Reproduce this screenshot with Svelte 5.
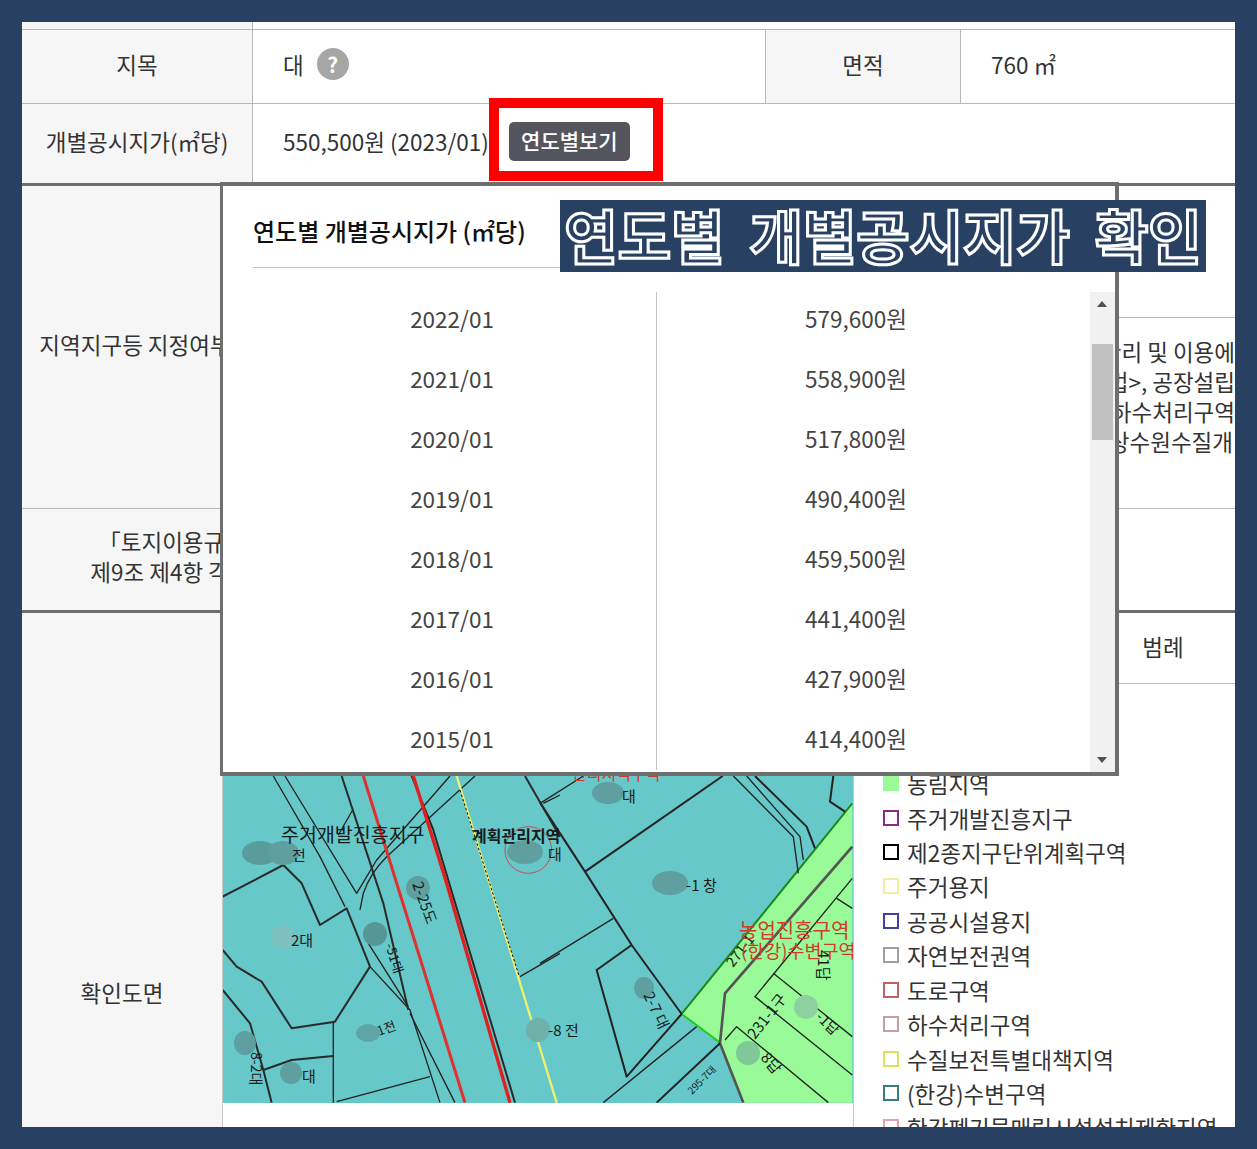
<script lang="ts">
	const years = [
		['2022/01', '579,600원'],
		['2021/01', '558,900원'],
		['2020/01', '517,800원'],
		['2019/01', '490,400원'],
		['2018/01', '459,500원'],
		['2017/01', '441,400원'],
		['2016/01', '427,900원'],
		['2015/01', '414,400원']
	];

	const legend = [
		['계획관리지역', '#c05050', false],
		['농업진흥구역', '#98fb98', false],
		['농림지역', '#98fb98', true],
		['주거개발진흥지구', '#8a2a8a', false],
		['제2종지구단위계획구역', '#000000', false],
		['주거용지', '#f0f0a0', false],
		['공공시설용지', '#4040a0', false],
		['자연보전권역', '#a0a0a0', false],
		['도로구역', '#c06060', false],
		['하수처리구역', '#c0a0a0', false],
		['수질보전특별대책지역', '#e0e060', false],
		['(한강)수변구역', '#308080', false],
		['한강폐기물매립시설설치제한지역', '#e0a0b0', false]
	];

	// 블러 처리된 지번 (좌표는 도면 기준)
	const blots = [
		[260, 853, 18, 12, '#5a9c9c'],
		[283, 853, 16, 12, '#5f9f9f'],
		[418, 888, 12, 12, '#5f9f9f'],
		[283, 937, 12, 12, '#7cc0c0'],
		[375, 934, 12, 12, '#559696'],
		[368, 1033, 12, 9, '#5fa5a5'],
		[245, 1043, 11, 12, '#5f9f9f'],
		[291, 1073, 11, 11, '#5f9f9f'],
		[525, 852, 18, 12, '#5f9f9f'],
		[538, 1030, 12, 12, '#6fb0a8'],
		[608, 793, 16, 11, '#5f9f9f'],
		[670, 883, 18, 12, '#5f9f9f'],
		[644, 988, 10, 11, '#5f9f9f'],
		[806, 1007, 12, 12, '#8fd0a0'],
		[748, 1053, 12, 12, '#80c898']
	];
</script>

<div class="page">
	<div class="sheet">
		<div class="row strip">
			<div class="th top-th"></div>
			<div class="td"></div>
		</div>
		<div class="row land">
			<div class="th top-th">지목</div>
			<div class="td land-val">
				<span>대</span>
				<span class="help">?</span>
			</div>
			<div class="th area-th">면적</div>
			<div class="td area-val">760 ㎡</div>
		</div>
		<div class="row price">
			<div class="th top-th">개별공시지가(㎡당)</div>
			<div class="td price-val">
				<span class="price-text">550,500원 (2023/01)</span>
				<button class="year-btn">연도별보기</button>
			</div>
		</div>
		<div class="row zone">
			<div class="th zone-th">지역지구등 지정여부</div>
			<div class="zone-right">
				<div class="zone-top"></div>
				<div class="zone-text">
					<span>가축분뇨의 관리 및 이용에</span>
					<span>공업지역 법>, 공장설립</span>
					<span>하수처리구역</span>
					<span class="short">상수원수질개</span>
				</div>
			</div>
		</div>
		<div class="row rule">
			<div class="th rule-th">「토지이용규제 기본법 시행령」<br />제9조 제4항 각 호에 해당되는 사항</div>
		</div>
		<div class="row plan">
			<div class="th plan-th">확인도면</div>
			<div class="plan-body">
				<div class="plan-head">
					<div class="head-map"></div>
					<div class="head-legend">범례</div>
				</div>
				<div class="plan-main">
					<svg class="map" viewBox="223 684 630 419" width="630" height="419">
						<rect x="223" y="684" width="630" height="419" fill="#66c8c8" />
						<g transform="translate(540 760) scale(0.3333)" fill="none" stroke-linejoin="round">
							<path d="M937 130 L425 762 L540 848 L610 1028 L937 1028 Z" fill="#98fb98" />
							<path d="M937 130 L425 762" stroke="#178a17" stroke-width="6" />
							<path d="M425 762 L540 848" stroke="#22cc22" stroke-width="6" />
							<path d="M937 260 L555 700 L540 850 L610 1028" stroke="#555" stroke-width="8" />
							<g stroke="#222" stroke-width="6">
								<path d="M540 850 L350 1028" />
								<path d="M425 762 L260 950 L170 630 L275 555" />
								<path d="M0 128 L135 335 L275 555 L425 762" />
								<path d="M135 335 L548 48" />
								<path d="M645 48 L800 200 L825 265" />
								<path d="M880 48 L870 125 L915 155" />
							</g>
							<g stroke="#222" stroke-width="4">
								<path d="M0 130 L130 48" />
								<path d="M220 475 L0 610" />
								<path d="M470 800 L190 1028" />
								<path d="M580 48 L760 230 L775 340" />
								<path d="M620 48 L780 230 L790 300" />
								<path d="M937 355 L645 710 L937 945" />
								<path d="M700 640 L937 830" />
								<path d="M555 840 L590 800 L865 1028" />
								<path d="M890 415 L937 445" />
							</g>
						</g>
						<g transform="translate(220 760) scale(0.3333)" fill="none" stroke-linejoin="round">
							<g stroke="#222" stroke-width="4">
								<path d="M160 48 L300 290 L375 440" />
								<path d="M195 48 L410 400 L470 300 L690 48" />
								<path d="M420 450 L430 400 Q450 340 500 290 L765 48" />
								<path d="M355 225 L398 150" />
								<path d="M445 550 L565 740" />
								<path d="M450 620 L570 750 L660 1028" />
								<path d="M570 760 L705 1028" />
								<path d="M350 1025 L630 950" />
								<path d="M970 130 L1020 105" />
								<path d="M900 650 L1020 580" />
								<path d="M340 785 L340 1028" />
							</g>
							<g stroke="#2a2a2a" stroke-width="6">
								<path d="M8 410 L190 315 L245 370 L300 495 L380 445 L450 620 L345 785 L215 805 L125 665 L50 620 L8 570" />
								<path d="M8 690 L90 790 L130 930 L155 1028" />
								<path d="M130 930 L215 900 L340 888" />
								<path d="M365 48 L490 430 L565 750" />
								<path d="M915 48 L1020 230" />
								<path d="M575 48 L640 210 L885 1028" />
							</g>
							<path d="M430 48 L735 1028" stroke="#e03030" stroke-width="9" />
							<path d="M580 48 L680 370 L870 1028" stroke="#e02020" stroke-width="10" />
							<path d="M710 48 L1010 1028" stroke="#eef070" stroke-width="7" />
							<path d="M720 90 L898 650" stroke="#111" stroke-width="3" stroke-dasharray="8 6" />
							<circle cx="925" cy="270" r="70" stroke="#c05050" stroke-width="3" />
						</g>
						{#each blots as [cx, cy, rx, ry, fill]}
							<ellipse {cx} {cy} {rx} {ry} {fill} />
						{/each}
						<g class="map-text">
							<text x="281" y="842" font-size="19.5">주거개발진흥지구</text>
							<text x="472" y="842" font-size="16" font-weight="700">계획관리지역</text>
							<text x="548" y="860" font-size="15">대</text>
							<text x="622" y="802" font-size="15">대</text>
							<text x="292" y="861" font-size="15">전</text>
							<text x="291" y="946" font-size="15">2대</text>
							<text x="302" y="1082" font-size="15">대</text>
							<text x="379" y="1036" font-size="13" transform="rotate(-20 379 1036)">1전</text>
							<text x="686" y="891" font-size="15">-1 창</text>
							<text x="548" y="1036" font-size="15">-8 전</text>
							<text transform="translate(412 884) rotate(70)" font-size="15">2-25도</text>
							<text transform="translate(385 945) rotate(72)" font-size="13">-51대</text>
							<text transform="translate(251 1052) rotate(90)" font-size="14">8-2대</text>
							<text transform="translate(643 995) rotate(65)" font-size="15">2-7 대</text>
							<text transform="translate(755 1040) rotate(-52)" font-size="15">231-1구</text>
							<text transform="translate(818 950) rotate(90)" font-size="15">41답</text>
							<text transform="translate(815 1018) rotate(45)" font-size="14">-1답</text>
							<text transform="translate(760 1058) rotate(50)" font-size="15">8답</text>
							<text transform="translate(692 1095) rotate(-45)" font-size="10">295-7대</text>
							<text transform="translate(733 968) rotate(-52)" font-size="14">271-1</text>
							<text x="739" y="938" font-size="20" fill="#d23a2a">농업진흥구역</text>
							<text x="741" y="958" font-size="18.5" fill="#d23a2a">(한강)수변구역</text>
							<text x="572" y="780" font-size="16" fill="#d23a2a">관리지역구역</text>
						</g>
					</svg>
					<div class="legend">
						{#each legend as [name, color, filled]}
							<div class="legend-item">
								<span class="swatch" style="border-color: {color}; background: {filled ? color : 'transparent'}"></span>
								<span>{name}</span>
							</div>
						{/each}
					</div>
				</div>
			</div>
		</div>

		<!-- 연도별 팝업 -->
		<div class="popup">
			<div class="popup-head">연도별 개별공시지가 (㎡당)</div>
			<div class="popup-body">
				<div class="list">
					<div class="list-inner">
						{#each years as [year, value]}
							<div class="cell year">{year}</div>
							<div class="cell value">{value}</div>
						{/each}
					</div>
				</div>
				<div class="scrollbar">
					<span class="arrow up"></span>
					<span class="thumb"></span>
					<span class="arrow down"></span>
				</div>
			</div>
		</div>

		<div class="red-box"></div>
		<div class="banner">연도별 개별공시지가 확인</div>
	</div>
</div>

<style>
	:global(body) {
		margin: 0;
		font-family: 'Noto Sans CJK KR', 'Noto Sans', sans-serif;
	}

	.page {
		box-sizing: border-box;
		width: 1257px;
		height: 1149px;
		padding: 22px;
		background: #284163;
	}

	.sheet {
		position: relative;
		height: 1105px;
		overflow: hidden;
		background: #fff;
		color: #333;
		font-size: 22.5px;
		line-height: 30px;
	}

	.row {
		display: flex;
		box-sizing: border-box;
		border-bottom: 1px solid #b8b8b8;
	}

	.th {
		display: flex;
		align-items: center;
		justify-content: center;
		box-sizing: border-box;
		background: #f6f6f6;
		text-align: center;
	}

	.td {
		display: flex;
		align-items: center;
		box-sizing: border-box;
		flex: 1;
	}

	.top-th {
		width: 231px;
		border-right: 1px solid #b8b8b8;
	}

	.strip {
		height: 8px;
	}

	.land {
		height: 74px;
	}

	.land .th,
	.land .td {
		padding-bottom: 6px;
	}

	.land-val {
		flex: none;
		width: 512px;
		padding-left: 30px;
		gap: 13px;
	}

	.help {
		display: flex;
		align-items: center;
		justify-content: center;
		width: 32px;
		height: 32px;
		border-radius: 50%;
		background: #a6a6a6;
		color: #fff;
		font-size: 21px;
		font-weight: 700;
	}

	.area-th {
		width: 196px;
		border-left: 1px solid #b8b8b8;
		border-right: 1px solid #b8b8b8;
	}

	.area-val {
		padding-left: 30px;
	}

	.price {
		height: 82px;
		border-bottom: 3px solid #6e6e6e;
	}

	.price .th {
		padding-bottom: 6px;
	}

	.price-val {
		padding-left: 30px;
		padding-bottom: 4px;
		gap: 20px;
	}

	.price-text {
		padding-bottom: 2px;
	}

	.year-btn {
		width: 121px;
		height: 39px;
		padding: 0 0 4px;
		border: 0;
		border-radius: 5px;
		background: #55555f;
		color: #fff;
		font-family: inherit;
		font-size: 21px;
		font-weight: 500;
	}

	.zone {
		height: 323px;
	}

	.zone-th {
		width: 226px;
		padding-bottom: 6px;
	}

	.zone-right {
		flex: 1;
		display: flex;
		flex-direction: column;
	}

	.zone-top {
		height: 131px;
		border-bottom: 1px solid #b8b8b8;
	}

	.zone-text {
		display: flex;
		flex-direction: column;
		align-items: flex-end;
		padding-top: 18px;
		white-space: nowrap;
	}

	.short {
		margin-right: 2px;
	}

	.rule {
		height: 104px;
		border-bottom: 3px solid #6e6e6e;
	}

	.rule-th {
		width: 456px;
		padding-bottom: 8px;
	}

	.plan {
		height: 758px;
		border-bottom: 0;
	}

	.plan-th {
		width: 201px;
		border-right: 1px solid #c8c8c8;
	}

	.plan-body {
		flex: 1;
		display: flex;
		flex-direction: column;
	}

	.plan-head {
		display: flex;
		height: 71px;
		box-sizing: border-box;
		border-bottom: 1px solid #b8b8b8;
	}

	.head-map {
		flex: 1;
	}

	.head-legend {
		display: flex;
		align-items: center;
		justify-content: center;
		width: 144px;
		padding-bottom: 4px;
		box-sizing: border-box;
	}

	.plan-main {
		flex: 1;
		display: flex;
	}

	.map {
		display: block;
		flex: none;
	}

	.map-text {
		fill: #1a1a1a;
		font-family: 'Noto Sans CJK KR', sans-serif;
	}

	.legend {
		flex: 1;
		padding: 13px 0 0 29px;
		border-left: 1px solid #c8c8c8;
		white-space: nowrap;
	}

	.legend-item {
		display: flex;
		align-items: center;
		gap: 8px;
		height: 34.45px;
	}

	.swatch {
		box-sizing: border-box;
		width: 16px;
		height: 16px;
		border: 2px solid;
	}

	.popup {
		position: absolute;
		left: 198px;
		top: 160px;
		display: flex;
		flex-direction: column;
		box-sizing: border-box;
		width: 899px;
		height: 594px;
		border: 3px solid #6e6e6e;
		border-top-width: 4px;
		border-right-width: 4px;
		border-bottom-width: 4px;
		background: #fff;
	}

	.popup-head {
		height: 81px;
		margin: 0 30px;
		border-bottom: 1px solid #c4c4c4;
		color: #111;
		font-size: 24px;
		font-weight: 500;
		line-height: 90px;
	}

	.popup-body {
		flex: 1;
		display: flex;
		min-height: 0;
		margin-top: 24px;
	}

	.list {
		flex: 1;
		overflow: hidden;
	}

	.list-inner {
		display: grid;
		grid-template-columns: 434px 1fr;
		margin-top: -2px;
	}

	.cell {
		height: 60px;
		color: #444;
		line-height: 56px;
		text-align: center;
	}

	.year {
		padding-left: 25px;
		border-right: 1px solid #c4c4c4;
		box-sizing: border-box;
	}

	.value {
		padding-right: 35px;
	}

	.scrollbar {
		position: relative;
		width: 25px;
		background: #f1f1f1;
	}

	.thumb {
		position: absolute;
		left: 2px;
		top: 52px;
		width: 21px;
		height: 96px;
		background: #c1c1c1;
	}

	.arrow {
		position: absolute;
		left: 7px;
		width: 0;
		height: 0;
		border-left: 5px solid transparent;
		border-right: 5px solid transparent;
	}

	.up {
		top: 9px;
		border-bottom: 6px solid #505050;
	}

	.down {
		bottom: 9px;
		border-top: 6px solid #505050;
	}

	.red-box {
		position: absolute;
		left: 467px;
		top: 76px;
		box-sizing: border-box;
		width: 174px;
		height: 83px;
		border: 10px solid #ff0000;
	}

	.banner {
		position: absolute;
		left: 538px;
		top: 178px;
		width: 646px;
		height: 72px;
		background: #284163;
		color: #284163;
		font-size: 58px;
		font-weight: 700;
		line-height: 68px;
		word-spacing: 12px;
		text-align: center;
		white-space: nowrap;
		-webkit-text-stroke: 3px #fff;
	}
</style>
